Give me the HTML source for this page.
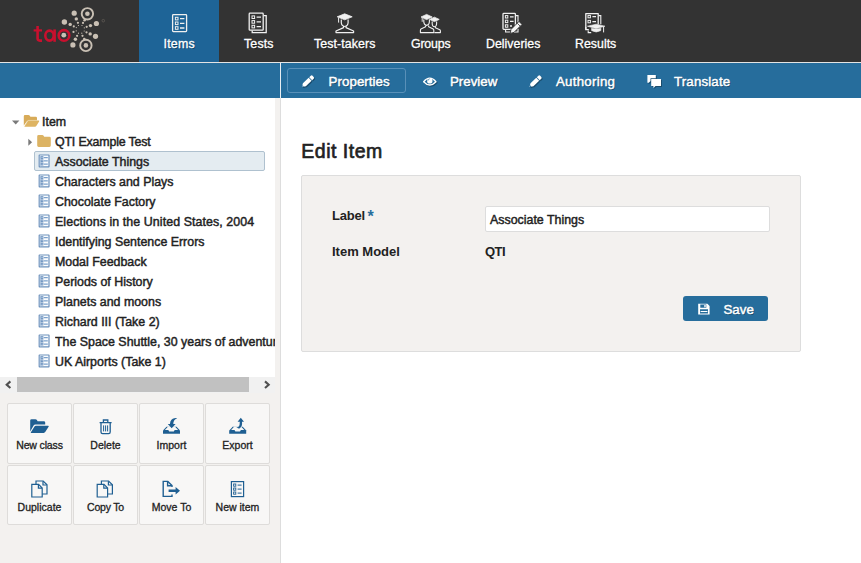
<!DOCTYPE html>
<html><head><meta charset="utf-8">
<style>
*{box-sizing:border-box;margin:0;padding:0}
html,body{width:861px;height:563px;overflow:hidden;background:#fff;font-family:"Liberation Sans",sans-serif;color:#222;}
body{position:relative}
.abs{position:absolute}
#hdr{left:0;top:0;width:861px;height:62px;background:#333;}
#tabsel{left:139px;top:0;width:80px;height:62px;background:#1e6497;}
.nav{position:absolute;top:37px;height:14px;line-height:14px;color:#fff;font-size:12.4px;white-space:nowrap;text-shadow:1px 1px 0 rgba(0,0,0,.35);-webkit-text-stroke:.3px #fff}
#hline{left:0;top:62px;width:861px;height:1px;background:#e4e4e4}
#bar{left:0;top:63px;width:861px;height:35px;background:#266d9c}
#left{left:0;top:98px;width:280px;height:465px;background:#f3f1ef}
#tree{left:0;top:98px;width:275px;height:279px;background:#fff}
#vline{left:280px;top:63px;width:1px;height:500px;background:#ddd}
.ti{position:absolute;left:55px;height:16px;line-height:16px;margin-top:1px;font-size:12.4px;color:#222;white-space:nowrap;-webkit-text-stroke:.45px #222}
.ico{position:absolute;left:38.5px;width:11px;height:13px}
.act{position:absolute;top:74.400px;height:16px;line-height:16px;font-size:13.3px;color:#fff;white-space:nowrap;text-shadow:1px 1px 0 rgba(0,0,0,.35);-webkit-text-stroke:.45px #fff}
.btn{position:absolute;width:65px;height:60px;background:#f8f7f6;border:1px solid #dedcda;border-radius:2px}
.btn span{position:absolute;left:-5px;width:73px;top:34px;height:14px;line-height:14px;text-align:center;font-size:10.5px;color:#222;white-space:nowrap;-webkit-text-stroke:.3px #222}
.btn svg{position:absolute}
svg{overflow:visible}
</style></head><body>
<div id="hdr" class="abs"></div>
<div id="tabsel" class="abs"></div>

<!-- logo -->
<svg class="abs" style="left:0;top:0" width="139" height="62" viewBox="0 0 139 62">
 <g fill="none" stroke="#c8102e" stroke-width="2.6">
  <path d="M37.6 26v12.6q0 2 2.2 2h2.2"/><path d="M33.6 30.4h8.4" stroke-width="2.2"/>
  <ellipse cx="49.5" cy="35.6" rx="4.2" ry="5"/><path d="M54.6 29.4v12.4"/>
  <ellipse cx="64" cy="35.4" rx="5.3" ry="5.3"/>
 </g>
 <g fill="#c9c0b4">
  <circle cx="63.8" cy="35.2" r="2.4"/>
  <circle cx="87.4" cy="13.8" r="2.300"/><circle cx="85.9" cy="45.4" r="2.300"/>
  <circle cx="74.2" cy="13.2" r="2.6"/><circle cx="64.4" cy="22" r="2.7"/><circle cx="96.4" cy="23.5" r="2.6"/>
  <circle cx="95.5" cy="36.3" r="2.6"/><circle cx="72.9" cy="44.9" r="2.6"/>
  <circle cx="76.3" cy="18.9" r="1.7"/><circle cx="70.2" cy="24.4" r="1.7"/><circle cx="90.5" cy="25.6" r="1.7"/>
  <circle cx="90.2" cy="33.9" r="1.7"/><circle cx="75.4" cy="39.3" r="1.7"/><circle cx="84.6" cy="20.2" r="1.3"/><circle cx="84.3" cy="39" r="1.3"/>
  <circle cx="77.9" cy="22.8" r="1.1"/><circle cx="83" cy="22.9" r="1.1"/><circle cx="73.8" cy="26.4" r="1.1"/><circle cx="86.7" cy="26.8" r="1.1"/>
  <circle cx="73.5" cy="31.9" r="1.1"/><circle cx="86.5" cy="32.3" r="1.1"/><circle cx="77.1" cy="35.8" r="1.1"/><circle cx="82.5" cy="35.8" r="1.1"/>
  <circle cx="78.5" cy="25.5" r=".6"/><circle cx="82" cy="25.5" r=".6"/><circle cx="76.3" cy="27.6" r=".6"/><circle cx="84.3" cy="27.8" r=".6"/>
  <circle cx="76.2" cy="30.8" r=".6"/><circle cx="84.2" cy="31" r=".6"/><circle cx="78.5" cy="33.2" r=".6"/><circle cx="81.8" cy="33.2" r=".6"/>
 </g>
 <g fill="none" stroke="#c9c0b4" stroke-width="1.900"><circle cx="87.4" cy="13.8" r="5.700"/><circle cx="85.9" cy="45.4" r="5.700"/></g>
 <circle cx="103.3" cy="20.7" r="1.3" fill="none" stroke="#6b655e" stroke-width=".6"/>
</svg>


<!-- nav icons -->
<svg class="abs" style="left:0;top:0" width="861" height="62" viewBox="0 0 861 62" fill="none" stroke="#f0f0f0" stroke-width="1.3">
 <!-- items -->
 <g id="lst"><rect x="172.6" y="14.6" width="14" height="17" rx=".8"/>
 <rect x="175.4" y="17.3" width="2.6" height="2.6" stroke-width="1"/><rect x="175.4" y="22" width="2.6" height="2.6" stroke-width="1"/><rect x="175.4" y="26.7" width="2.6" height="2.6" stroke-width="1"/>
 <path d="M180 18.6h4.4M180 23.3h4.4M180 28h4.4"/></g>
 <!-- tests -->
 <g transform="translate(76.6,-1.4)"><rect x="172.6" y="14.6" width="14" height="17" rx=".8"/>
 <rect x="175.4" y="17.3" width="2.6" height="2.6" stroke-width="1"/><rect x="175.4" y="22" width="2.6" height="2.6" stroke-width="1"/><rect x="175.4" y="26.7" width="2.6" height="2.6" stroke-width="1"/>
 <path d="M180 18.6h4.4M180 23.3h4.4M180 28h4.4"/><path d="M187 17h2.6v17h-14v-2.2"/></g>
 <!-- test-takers -->
 <g id="tt"><path d="M337.2 16.8l7.5-3 7.5 3-7.5 3z" fill="#f0f0f0" stroke-width=".8"/>
 <path d="M338.6 17.6v5" stroke-width="1"/>
 <path d="M341.3 19.6v3.2q.3 3.4 3.4 3.7q3.1-.3 3.4-3.7v-3.2" stroke-width="1.2"/>
 <path d="M343.6 26v1.6l-7.6 3.4v1.6h17.6v-1.6l-7.6-3.4v-1.6" stroke-width="1.2" stroke-linejoin="round"/></g>
 <!-- groups -->
 <g stroke-width="1.1"><path d="M421 17l5.6-2.6 5.6 2.6-5.6 2.6z" fill="#f0f0f0" stroke-width=".8"/>
 <path d="M422.2 17.8v4" stroke-width=".9"/>
 <path d="M423.8 19.4v2.6q.3 3.2 2.8 3.4q2.5-.2 2.8-3.4v-2.6"/>
 <path d="M425.6 25.4v1.4l-4.6 2.2q-.6.4-.6 1.4v2.2h13.4v-2.2q0-1-.6-1.4l-4.6-2.200v-1.400" stroke-linejoin="round"/>
 <path d="M429.600 19.4l4.800-2.200 4.800 2.200-4.800 2.200z" fill="#f0f0f0" stroke-width=".8"/>
 <path d="M432.200 21.600v2.400q.2 2.600 2.200 2.800q2-.2 2.200-2.800v-2.400"/>
 <path d="M435.400 27v.8l4.400 2q.6.400.6 1.200v1.600h-6" stroke-linejoin="round"/></g>
 <!-- deliveries -->
 <g><rect x="503" y="13.4" width="12.400" height="16" rx=".8"/>
 <rect x="505.400" y="15.600" width="2.400" height="2.400" stroke-width="1"/><rect x="505.400" y="20.200" width="2.400" height="2.400" stroke-width="1"/><rect x="505.400" y="24.800" width="2.400" height="2.400" stroke-width="1"/>
 <path d="M510 16.800h3.600M510 21.400h3.600M510 26h2"/><path d="M515.800 15.600h2.200v7M505.600 29.800v2.200h12.400v-3" stroke-width="1.100"/>
 <path d="M519 21.400l3 3-8 8-3.800 1 .8-4z" fill="#f4f4f4" stroke="#333" stroke-width=".9"/><path d="M517.300 23.300l3 3" stroke="#333" stroke-width=".8"/></g>
 <!-- results -->
 <g><path d="M585.800 29.600v-16h12.400v10.600" stroke-linejoin="round"/><path d="M585.800 27v2.600h3"/>
 <rect x="588" y="15.400" width="2.400" height="2.400" stroke-width="1"/><rect x="588" y="20.400" width="2.400" height="2.400" stroke-width="1"/>
 <path d="M592.400 16.600h3.600M592.400 21.600h3.600"/><path d="M598.600 15.600h2.200v8.600M588.200 30.400v2.200h3" stroke-width="1.100"/>
 <path d="M587.400 26.200l8.800-2 8.800 2-8.800 2.400z" fill="#f0f0f0" stroke-width=".6"/>
 <path d="M591.600 28.200v2.400q4.600 2.800 9.200 0v-2.400q-4.600 1.800-9.200 0z" fill="#f0f0f0" stroke-width=".6"/><path d="M603.600 26.800v5.600" stroke-width="1"/></g>
</svg>
<!-- nav -->
<div class="nav" style="left:163.5px;letter-spacing:.2px">Items</div>
<div class="nav" style="left:244px;letter-spacing:.15px">Tests</div>
<div class="nav" style="left:314px;letter-spacing:.08px">Test-takers</div>
<div class="nav" style="left:411px;letter-spacing:-.2px">Groups</div>
<div class="nav" style="left:486px">Deliveries</div>
<div class="nav" style="left:575px">Results</div>

<div id="hline" class="abs"></div>
<div id="bar" class="abs"></div>
<div id="left" class="abs"></div>
<div id="tree" class="abs"></div>
<div id="vline" class="abs"></div>
<div class="abs" style="left:280px;top:63px;width:1px;height:35px;background:#e9eef2"></div>

<!-- action bar -->
<div class="abs" style="left:287px;top:68px;width:119px;height:25px;border:1px solid #5990b8;border-radius:3px;background:#266d9c"></div>
<div class="act" style="left:328.600px;letter-spacing:.05px">Properties</div>
<div class="act" style="left:450px">Preview</div>
<div class="act" style="left:556px;letter-spacing:.25px">Authoring</div>
<div class="act" style="left:674px;letter-spacing:.15px">Translate</div>


<!-- action icons -->
<svg class="abs" style="left:0;top:63px" width="861" height="35" viewBox="0 63 861 35">
 <defs><g id="pen"><g transform="translate(0.1,11.1) rotate(-43.5)"><path d="M0 0L3.400-2.100H11.300V2.100H3.400Z M12.100-2.100h2.100q1.300 0 1.300 1.300v1.600q0 1.300-1.300 1.300h-2.100z" fill="#fff"/><path d="M1.300-.8v1.600" stroke="#266d9c" stroke-width="1"/></g></g></defs>
 <g filter="drop-shadow(1px 1px 0 rgba(0,0,0,.3))">
 <use href="#pen" x="301.800" y="76"/>
 <use href="#pen" x="529.400" y="76"/>
 <path d="M423.600 81.700q6.200-7 12.400 0q-6.200 6.600-12.400 0z" fill="#266d9c" stroke="#fff" stroke-width="1.300" stroke-linejoin="round"/><circle cx="429.800" cy="80.900" r="2.700" fill="#fff"/><path d="M428 80.600q.2-1.400 1.600-1.700" fill="none" stroke="#266d9c" stroke-width=".7"/>
 <path d="M647.400 75h8.400v3.300h-5.300v2.600l-1.700 1.900h-1.400z" fill="#fff"/>
 <path d="M651.200 79.100h9.800v6.900h-5.500l-2.100 2.100v-2.100h-2.200z" fill="#fff"/>
 </g>
</svg>
<!-- tree -->
<div class="abs" style="left:34px;top:151px;width:231px;height:20px;background:#e4ecf1;border:1px solid #afc1cf;border-radius:2px"></div>
<div class="ti" style="left:42px;top:113px">Item</div>
<div class="ti" style="top:133px;letter-spacing:-.17px">QTI Example Test</div>
<div class="ti" style="top:153px">Associate Things</div>
<div class="ti" style="top:173px">Characters and Plays</div>
<div class="ti" style="top:193px">Chocolate Factory</div>
<div class="ti" style="top:213px;letter-spacing:.08px">Elections in the United States, 2004</div>
<div class="ti" style="top:233px">Identifying Sentence Errors</div>
<div class="ti" style="top:253px">Modal Feedback</div>
<div class="ti" style="top:273px">Periods of History</div>
<div class="ti" style="top:293px">Planets and moons</div>
<div class="ti" style="top:313px">Richard III (Take 2)</div>
<div class="ti" style="top:333px;width:220px;overflow:hidden">The Space Shuttle, 30 years of adventure</div>
<div class="ti" style="top:353px">UK Airports (Take 1)</div>

<!-- scrollbar -->
<div class="abs" style="left:0;top:377px;width:275px;height:16px;background:#f1f1f1"></div>
<div class="abs" style="left:17px;top:377px;width:232px;height:15px;background:#c1c1c1"></div>


<!-- tree icons -->
<svg class="abs" style="left:0;top:98px" width="275" height="295" viewBox="0 98 275 295">
 <defs>
  <g id="it"><rect x=".6" y=".6" width="9.800" height="11.800" rx=".3" fill="#fafcfe" stroke="#6d91bc" stroke-width="1.200"/>
   <path d="M1.900 1.200v10.600" stroke="#c3d4e8" stroke-width="1.200"/>
   <rect x="2.500" y="2.300" width="1.900" height="1.900" fill="#e8f0f8" stroke="#5580b4" stroke-width=".8"/><rect x="2.500" y="5.500" width="1.900" height="1.900" fill="#e8f0f8" stroke="#5580b4" stroke-width=".8"/><rect x="2.500" y="8.700" width="1.900" height="1.900" fill="#e8f0f8" stroke="#5580b4" stroke-width=".8"/>
   <path d="M5.400 3.300h3.800M5.400 6.500h3.800M5.400 9.700h3.800" stroke="#5d8cc0" stroke-width="1"/></g>
 </defs>
 <path d="M12 120.500h7.400l-3.700 4z" fill="#7a7a7a"/>
 <path d="M28.300 138.800v7l3.800-3.500z" fill="#7a7a7a"/>
 <!-- open folder -->
 <path d="M23.800 125.600v-9.400q0-1.200 1.200-1.200h3.400q1 0 1.400.8l.6 1h5.400q1.200 0 1.200 1.200v2.400h-8.600q-1 0-1.500.9z" fill="#d8ab58"/>
 <path d="M24.300 126.700l3.200-5.400q.4-.7 1.300-.7h9.800q1 0 .5.900l-2.800 4.600q-.4.700-1.300.7h-10.200q-.9 0-.5-.1z" fill="#deb463"/>
 <path d="M25 125.400l2.700-4.500q.3-.5 1-.5h8.600" fill="none" stroke="#efd9a8" stroke-width=".6"/>
 <!-- closed folder -->
 <path d="M37.200 145.600v-9.200q0-1.400 1.400-1.400h3.600q1 0 1.400.8l.6 1h5.200q1.400 0 1.400 1.400v7.400q0 1.400-1.400 1.400h-10.800q-1.400 0-1.400-1.400z" fill="#dcb363"/>
 <use href="#it" x="38.600" y="154.400"/><use href="#it" x="38.600" y="174.400"/><use href="#it" x="38.600" y="194.400"/><use href="#it" x="38.600" y="214.400"/>
 <use href="#it" x="38.600" y="234.400"/><use href="#it" x="38.600" y="254.400"/><use href="#it" x="38.600" y="274.400"/><use href="#it" x="38.600" y="294.400"/>
 <use href="#it" x="38.600" y="314.400"/><use href="#it" x="38.600" y="334.400"/><use href="#it" x="38.600" y="354.400"/>
 <path d="M10.400 381.400l-3.700 3.300 3.700 3.300M265 381.400l3.700 3.300-3.700 3.300" fill="none" stroke="#505050" stroke-width="2.100"/>
</svg>
<!-- buttons -->
<div class="btn" style="left:7px;top:403px;height:61px"><span style="letter-spacing:-.15px">New class</span></div>
<div class="btn" style="left:73px;top:403px;height:61px"><span>Delete</span></div>
<div class="btn" style="left:139px;top:403px;height:61px"><span>Import</span></div>
<div class="btn" style="left:205px;top:403px;height:61px"><span>Export</span></div>
<div class="btn" style="left:7px;top:465px"><span>Duplicate</span></div>
<div class="btn" style="left:73px;top:465px"><span style="letter-spacing:-.2px">Copy To</span></div>
<div class="btn" style="left:139px;top:465px"><span>Move To</span></div>
<div class="btn" style="left:205px;top:465px"><span>New item</span></div>


<!-- button icons -->
<svg class="abs" style="left:0;top:400px" width="280" height="130" viewBox="0 400 280 130">
 <g fill="#1f5f92">
 <!-- folder open -->
 <path d="M30.200 431.400v-10.800q0-1.400 1.400-1.400h3.800q1 0 1.500.9l.7 1.100h6.200q1.400 0 1.400 1.400v2h-9.800q-1.200 0-1.800 1z"/>
 <path d="M30.600 432.800l3.900-6.300q.5-.8 1.500-.8h12q1.200 0 .6 1l-3.400 5.400q-.5.800-1.500.8h-12.500q-1 0-.6-.1z"/>
 </g>
 <!-- trash -->
 <g fill="none" stroke="#1f5f92" stroke-width="1.300">
  <path d="M99.600 422.600h12M103.400 422.400v-2.400h4.400v2.400"/>
  <path d="M101 423v9q0 1.600 1.600 1.600h6q1.600 0 1.600-1.600v-9"/>
  <path d="M103.600 425.400v6M105.600 425.400v6M107.600 425.400v6" stroke-width="1"/>
 </g>
 <!-- import -->
 <g id="tray"><path d="M163 433.800v-3.300l3.500-3.800h10l3.500 3.800v3.300z" fill="#1f5f92"/><path d="M168.100 426.600h6.800l3.200 3.500h-3.400l-.9 1.500h-4.600l-.9-1.500h-3.400z" fill="#f8f7f6"/></g>
 <path d="M177.200 418.200q-4.600-.6-6.800 3.200l-.4 2.600h-2.200l3.900 4.200 3.900-4.200h-2.300q-.2-4 3.900-5.800z" fill="#1f5f92"/>
 <!-- export -->
 <use href="#tray" x="66.200"/>
 <path d="M236.200 427.600q3-.4 3.400-3.200l.2-2.600h-2.200l3.200-4 3.200 4h-2q.6 4.600-2.200 6.400-1.600.6-3.600-.6z" fill="#1f5f92"/>
 <!-- duplicate / copy -->
 <g id="cp" fill="#f8f7f6" stroke="#1f5f92" stroke-width="1.200"><path d="M36 494v-13h7.200l3.800 3.800v9.200z"/><path d="M43 481.200v3.800h3.800" fill="none"/>
  <path d="M31.800 497v-12.600h6.800l3.600 3.600v9z"/><path d="M38.400 484.600v3.600h3.600" fill="none"/></g>
 <use href="#cp" x="65.400"/>
 <!-- move to -->
 <g fill="none" stroke="#1f5f92" stroke-width="1.400"><path d="M172 487v-1.400l-4.200-4.200h-4.600v15h8.800v-2"/><path d="M167.600 481.600v4.200h4.200"/></g>
 <path d="M168.600 489.400h7v-2.400l4.400 3.700-4.400 3.700v-2.400h-7z" fill="#1f5f92"/>
 <!-- new item -->
 <g fill="none" stroke="#1f5f92" stroke-width="1.200"><rect x="231.400" y="481.600" width="12.200" height="15"/>
  <rect x="233.600" y="484" width="2.200" height="2.200" stroke-width=".9"/><rect x="233.600" y="488" width="2.200" height="2.200" stroke-width=".9"/><rect x="233.600" y="492" width="2.200" height="2.200" stroke-width=".9"/>
  <path d="M237.600 485.100h4M237.600 489.100h4M237.600 493.100h4" stroke-width="1"/></g>
</svg>
<!-- content -->
<div class="abs" id="h2" style="left:301.300px;top:139px;height:24px;line-height:24px;font-size:19.500px;letter-spacing:.5px;color:#222;white-space:nowrap;-webkit-text-stroke:.65px #222">Edit Item</div>
<div class="abs" style="left:301px;top:175px;width:500px;height:177px;background:#f3f1ef;border:1px solid #ddd;border-radius:2px"></div>
<div class="abs lbl" style="left:332px;top:208px;height:16px;line-height:16px;font-size:13px;font-weight:bold;color:#222;white-space:nowrap"><span style="letter-spacing:-.2px">Label</span> <span style="color:#266d9c;font-size:16px;line-height:0;position:relative;top:2.200px;left:-1.200px">*</span></div>
<div class="abs lbl" style="left:332px;top:244px;height:16px;line-height:16px;font-size:13px;font-weight:bold;color:#222;white-space:nowrap">Item Model</div>
<div class="abs" style="left:485px;top:206px;width:285px;height:26px;background:#fff;border:1px solid #ddd;border-radius:2px"></div>
<div class="ti" style="left:490px;top:211px">Associate Things</div>
<div class="abs" style="left:485px;top:244px;height:16px;line-height:16px;font-size:13px;font-weight:bold;letter-spacing:-.5px;color:#222">QTI</div>
<div class="abs" style="left:683px;top:296px;width:85px;height:25px;background:#266d9c;border-radius:3px"></div>
<div class="act" style="left:723.5px;top:302px">Save</div>
<!-- save icon -->
<svg class="abs" style="left:690px;top:298px" width="30" height="22" viewBox="690 298 30 22">
 <path d="M698.200 303.800h9.200l2.200 2.200v8.600h-11.400z" fill="#fff"/>
 <path d="M700.300 304.500h6v3.200h-6z M700 309.300h8v4.300h-8z" fill="#266d9c"/><path d="M704.300 305h1.400v2.300h-1.400z M700.600 311h6.800v1h-6.800z" fill="#fff"/>
</svg>
</body></html>
